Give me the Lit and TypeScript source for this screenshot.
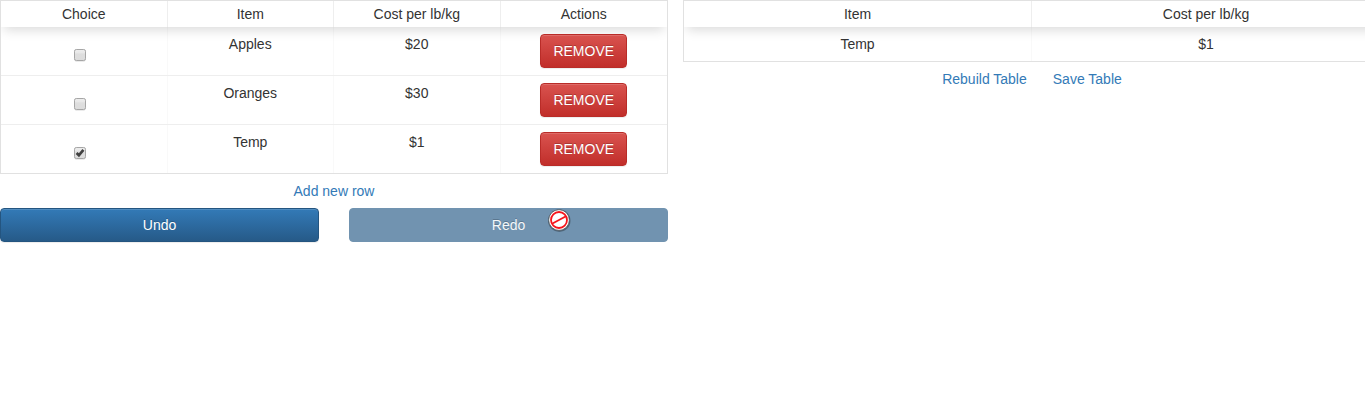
import { LitElement, html, css, svg, nothing } from "lit";
import { customElement, property, state } from "lit/decorators.js";

interface Row {
  item: string;
  cost: string;
  chosen: boolean;
}

@customElement("check-box")
class CheckBox extends LitElement {
  @property({ type: Boolean }) checked = false;

  static styles = css`
    :host { display: block; width: 12px; height: 12px; }
    svg { display: block; overflow: visible; }
  `;

  render() {
    return html`<svg width="12" height="12" viewBox="0 0 12 12">
      <defs>
        <linearGradient id="fill" x1="0" y1="0" x2="0" y2="1">
          <stop offset="0" stop-color="#ededed" />
          <stop offset="0.3" stop-color="#e8e8e8" />
          <stop offset="0.4" stop-color="#dedede" />
          <stop offset="1" stop-color="#dcdcdc" />
        </linearGradient>
      </defs>
      <rect x="0.5" y="1" width="11" height="11.5" rx="2" fill="none" stroke="#000" stroke-opacity="0.08" />
      <rect x="0.5" y="0.5" width="11" height="11" rx="1.8" fill="url(#fill)" stroke="#a6a6a6" />
      ${this.checked
        ? svg`<path d="M2.6 6 L4.9 8.3 L9.4 2.9" fill="none" stroke="#404040" stroke-width="2.7" />`
        : nothing}
    </svg>`;
  }
}

@customElement("app-root")
class AppRoot extends LitElement {
  @state() rows: Row[] = [
    { item: "Apples", cost: "$20", chosen: false },
    { item: "Oranges", cost: "$30", chosen: false },
    { item: "Temp", cost: "$1", chosen: true },
  ];

  static styles = css`
    :host {
      display: block;
      height: 415px;
      overflow: hidden;
      background: #fff;
      color: #333;
      font: 14px/20px "Liberation Sans", Arial, sans-serif;
    }
    * { box-sizing: border-box; }
    .page {
      display: grid;
      grid-template-columns: 668px 698px;
      column-gap: 15px;
      align-items: start;
      width: 1381px;
    }
    .table { border: 1px solid #e1e1e1; text-align: center; }
    .line { display: grid; }
    .four { grid-template-columns: repeat(4, 1fr); }
    .two { grid-template-columns: repeat(2, 1fr); }
    .head {
      height: 26px;
      box-shadow: 0 6px 12px -3px rgba(0, 0, 0, 0.15);
      clip-path: inset(0 0 -20px 0);
    }
    .cell { border-right: 1px solid rgba(0, 0, 0, 0.025); }
    .head .cell { padding: 3px 0; border-right-color: #eee; }
    .line .cell:last-child { border-right: 0; }
    .row { position: relative; }
    .row .cell { padding: 7px 0; }
    .row + .row { border-top: 1px solid #eee; }
    .left .row .cell { height: 48px; }
    .row .pick { display: flex; justify-content: center; padding: 22px 7px 0 0; }
    .btn {
      display: block;
      height: 34px;
      margin: 0;
      padding: 6px 12px;
      border: 1px solid;
      border-radius: 4px;
      color: #fff;
      font: inherit;
      text-align: center;
      text-shadow: 0 -1px 0 rgba(0, 0, 0, 0.2);
      box-shadow: inset 0 1px 0 rgba(255, 255, 255, 0.15), 0 1px 1px rgba(0, 0, 0, 0.075);
    }
    .danger {
      width: 87px;
      margin: 0 auto;
      border-color: #b92c28;
      background: linear-gradient(#d9534f, #c12e2a);
    }
    .primary { border-color: #245580; background: linear-gradient(#337ab7, #265a88); }
    .off { border-color: #7193b0; background: #7193b0; color: #f4f7f9; box-shadow: none; }
    .links { display: flex; justify-content: center; gap: 26px; padding: 7px 0; }
    .links a { color: #337ab7; text-decoration: none; }
    .history { display: grid; grid-template-columns: 1fr 1fr; gap: 30px; }
    .cursor { position: absolute; left: 547px; top: 208px; overflow: visible; pointer-events: none; }
  `;

  render() {
    return html`
      <div class="page">
        <section class="left">
          <div class="table">
            <div class="line four head">
              ${["Choice", "Item", "Cost per lb/kg", "Actions"].map((h) => html`<div class="cell">${h}</div>`)}
            </div>
            ${this.rows.map(
              (r) => html`<div class="line four row">
                <div class="cell pick"><check-box ?checked=${r.chosen}></check-box></div>
                <div class="cell">${r.item}</div>
                <div class="cell">${r.cost}</div>
                <div class="cell"><button class="btn danger">REMOVE</button></div>
              </div>`
            )}
          </div>
          <div class="links"><a>Add new row</a></div>
          <div class="history">
            <button class="btn primary">Undo</button>
            <button class="btn off">Redo</button>
          </div>
        </section>
        <section>
          <div class="table">
            <div class="line two head">
              <div class="cell">Item</div>
              <div class="cell">Cost per lb/kg</div>
            </div>
            ${this.rows
              .filter((r) => r.chosen)
              .map(
                (r) => html`<div class="line two row">
                  <div class="cell">${r.item}</div>
                  <div class="cell">${r.cost}</div>
                </div>`
              )}
          </div>
          <div class="links"><a>Rebuild Table</a><a>Save Table</a></div>
        </section>
      </div>
      <svg class="cursor" width="24" height="24" viewBox="0 0 24 24">
        <circle cx="12.3" cy="12.7" r="11.2" fill="#000" opacity="0.3" />
        <circle cx="12" cy="12" r="10.3" fill="#fff" stroke="#444" stroke-width="0.6" />
        <circle cx="12" cy="12" r="8" fill="#fff" stroke="#f5151b" stroke-width="1.8" />
        <path d="M5 15.8 L19 8.2" stroke="#f5151b" stroke-width="1.8" />
      </svg>
    `;
  }
}
